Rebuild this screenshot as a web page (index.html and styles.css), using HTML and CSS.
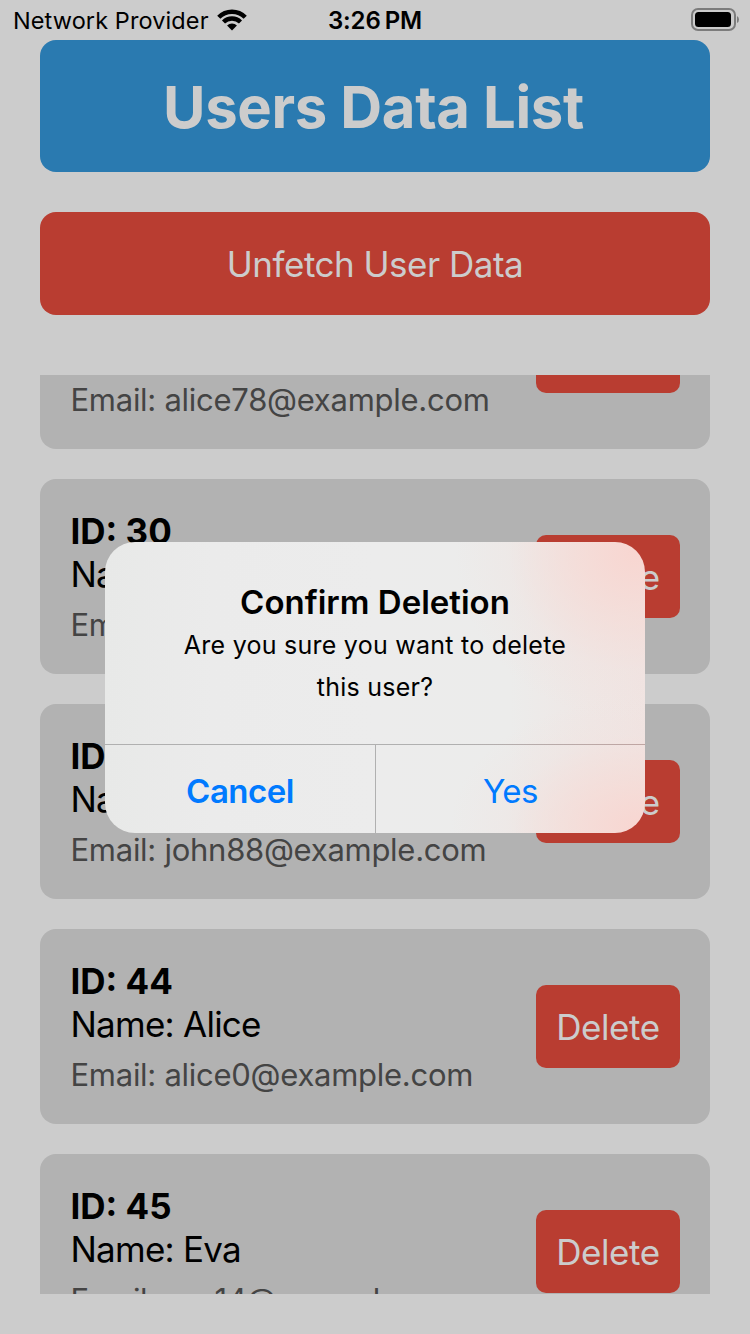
FILE: index.html
```
<!DOCTYPE html>
<html lang="en">
<head>
<meta charset="utf-8">
<title>Users Data List</title>
<link rel="stylesheet" href="styles.css">
</head>
<body>
<div class="screen">
  <div class="status">
    <div class="status-left">
      <span class="carrier">Network Provider</span>
      <svg class="wifi" width="30" height="22" viewBox="0 0 30 22">
        <path d="M1.78 8.28A18.7 18.7 0 0 1 28.22 8.28" fill="none" stroke="#000" stroke-width="4.5"/>
        <path d="M6.51 13.01A12 12 0 0 1 23.49 13.01" fill="none" stroke="#000" stroke-width="4.3"/>
        <path d="M15 21.500L10.05 16.550A7 7 0 0 1 19.950 16.550Z"/>
      </svg>
    </div>
    <span class="time">3:26<span class="meridiem">PM</span></span>
    <svg class="battery" width="50" height="24" viewBox="0 0 50 24">
      <rect x="1" y="1" width="43" height="21" rx="6" fill="none" stroke="#7c7c7c" stroke-width="2"/>
      <rect x="4" y="4" width="36" height="15" rx="3.5"/>
      <path d="M46 8Q48 9 48 11.500Q48 14 46 15Z" fill="#7c7c7c"/>
    </svg>
  </div>
  <header class="header"><h1 class="title">Users Data List</h1></header>
  <button class="fetch">Unfetch User Data</button>
  <main class="list">
    <article class="card first">
      <div class="info"><p class="id">ID: 29</p><p class="name">Name: Alice</p><p class="email">Email: alice78@example.com</p></div>
      <button class="delete">Delete</button>
    </article>
    <article class="card">
      <div class="info"><p class="id">ID: 30</p><p class="name">Name: Bob</p><p class="email">Email: bob@example.com</p></div>
      <button class="delete">Delete</button>
    </article>
    <article class="card">
      <div class="info"><p class="id">ID: 43</p><p class="name">Name: John</p><p class="email">Email: john88@example.com</p></div>
      <button class="delete">Delete</button>
    </article>
    <article class="card">
      <div class="info"><p class="id">ID: 44</p><p class="name">Name: Alice</p><p class="email">Email: alice0@example.com</p></div>
      <button class="delete">Delete</button>
    </article>
    <article class="card">
      <div class="info"><p class="id">ID: 45</p><p class="name">Name: Eva</p><p class="email">Email: eva14@example.com</p></div>
      <button class="delete">Delete</button>
    </article>
  </main>
  <section class="dialog" role="alertdialog">
    <div class="dialog-body">
      <h2 class="dialog-title">Confirm Deletion</h2>
      <p class="dialog-text">Are you sure you want to delete<br>this user?</p>
    </div>
    <div class="actions">
      <button class="action cancel">Cancel</button>
      <button class="action yes">Yes</button>
    </div>
  </section>
</div>
</body>
</html>
```
FILE: styles.css
```
* { box-sizing: border-box; }
body { margin: 0; background: #ccc; font-family: Inter, "Liberation Sans", sans-serif; }
h1, h2, p { margin: 0; }
button { border: 0; padding: 0; background: none; font: inherit; }
.screen {
  position: relative;
  width: 750px;
  height: 1334px;
  padding: 0 40px 40px;
  display: flex;
  flex-direction: column;
  overflow: hidden;
  background: #ccc;
  color: #000;
}
.status {
  flex: none;
  height: 40px;
  margin: 0 -40px;
  padding: 0 9px 0 13px;
  display: grid;
  grid-template-columns: 1fr auto 1fr;
  align-items: center;
}
.status-left { display: flex; align-items: center; gap: 8px; }
.carrier { font-size: 23.5px; letter-spacing: 0.1px; white-space: nowrap; }
.time { font-size: 24px; font-weight: 600; margin: 1px 4px 0 0; letter-spacing: -0.1px; }
.meridiem { margin-left: 4px; }
.battery { justify-self: end; }
.header {
  flex: none;
  height: 132px;
  padding: 2px 3px 0 0;
  border-radius: 16px;
  background: #2a7ab0;
  display: flex;
  align-items: center;
  justify-content: center;
}
.title { font-size: 58px; font-weight: 700; line-height: 72px; letter-spacing: -0.35px; color: #ccc; white-space: nowrap; }
.fetch {
  flex: none;
  height: 103px;
  margin-top: 40px;
  border-radius: 16px;
  background: #b93d31;
  color: #ccc;
  font-size: 35px;
  letter-spacing: -0.5px;
}
.list {
  flex: 1;
  min-height: 0;
  margin-top: 60px;
  display: flex;
  flex-direction: column;
  gap: 30px;
  overflow: hidden;
}
.card {
  flex: none;
  height: 195px;
  padding: 30px;
  border-radius: 16px;
  background: #b2b2b2;
  display: flex;
  align-items: center;
  justify-content: space-between;
}
.first { margin-top: -121px; }
.info { padding: 1px 0 0 0.5px; white-space: nowrap; }
.id, .name { font-size: 35px; line-height: 43px; }
.id { font-weight: 700; }
.name { letter-spacing: -0.75px; }
.email { margin-top: 9px; font-size: 31px; line-height: 39px; letter-spacing: -0.27px; color: #444; }
.delete {
  width: 144px;
  height: 83px;
  border-radius: 10px;
  background: #b93d31;
  color: #ccc;
  font-size: 35px;
  letter-spacing: -0.4px;
}
.dialog {
  position: absolute;
  left: 105px;
  top: 542px;
  width: 540px;
  height: 291px;
  border-radius: 30px;
  overflow: hidden;
  display: flex;
  flex-direction: column;
  background:
    radial-gradient(ellipse 180px 170px at 530px 10px, #f8d6d1 0%, rgba(246, 218, 213, 0.7) 35%, rgba(241, 225, 222, 0.3) 70%, rgba(240, 225, 222, 0) 100%),
    radial-gradient(ellipse 190px 130px at 535px 285px, #f8d6d1 0%, rgba(246, 218, 213, 0.7) 35%, rgba(241, 225, 222, 0.3) 70%, rgba(240, 225, 222, 0) 100%),
    linear-gradient(90deg, #e8e9e8 0, #ebebeb 20%, #ececec 50%, #ececeb 75%, #efe7e5 90%, #f0e4e2 100%);
}
.dialog-body { height: 202px; padding-top: 39px; text-align: center; }
.dialog-title { font-size: 33px; font-weight: 600; line-height: 43px; }
.dialog-text { font-size: 25px; line-height: 42px; letter-spacing: 0.25px; }
.actions {
  flex: 1;
  display: grid;
  grid-template-columns: 271px 1fr;
  border-top: 1px solid;
  border-image: linear-gradient(90deg, #b0b0b0 65%, #c0a5a2) 1;
}
.action { padding-top: 4px; color: #007aff; font-size: 33px; letter-spacing: -0.5px; }
.cancel { font-weight: 600; border-right: 1px solid #b0b0b0; }
```
